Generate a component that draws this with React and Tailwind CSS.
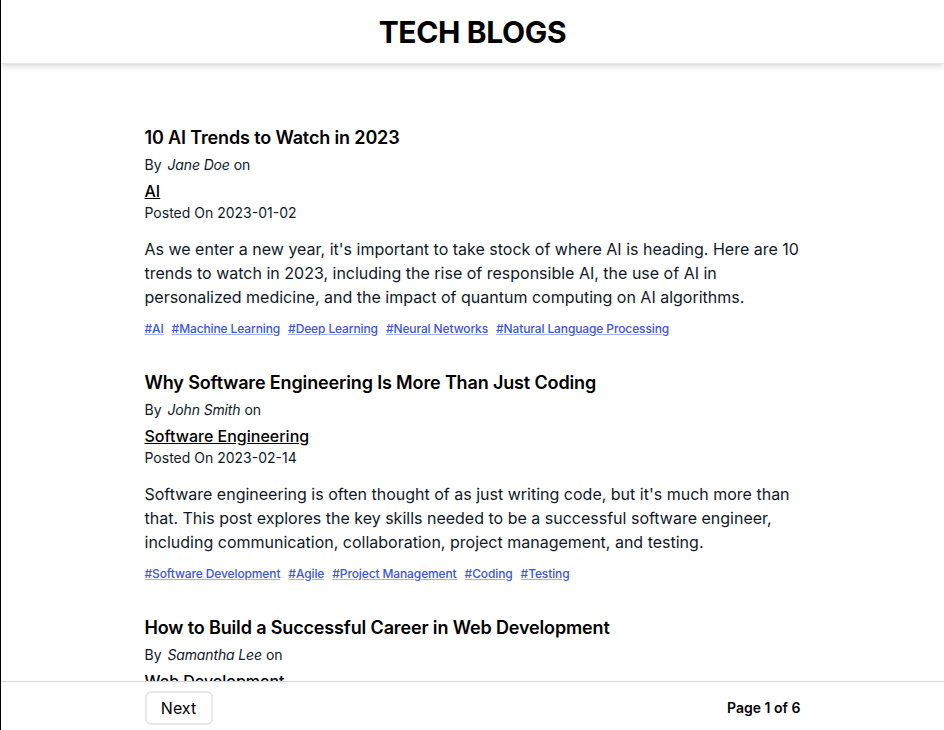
import React, { useState } from 'react';

const posts = [
  {
    title: '10 AI Trends to Watch in 2023',
    author: 'Jane Doe',
    category: 'AI',
    date: '2023-01-02',
    body: "As we enter a new year, it's important to take stock of where AI is heading. Here are 10 trends to watch in 2023, including the rise of responsible AI, the use of AI in personalized medicine, and the impact of quantum computing on AI algorithms.",
    tags: ['AI', 'Machine Learning', 'Deep Learning', 'Neural Networks', 'Natural Language Processing'],
  },
  {
    title: 'Why Software Engineering Is More Than Just Coding',
    author: 'John Smith',
    category: 'Software Engineering',
    date: '2023-02-14',
    body: "Software engineering is often thought of as just writing code, but it's much more than that. This post explores the key skills needed to be a successful software engineer, including communication, collaboration, project management, and testing.",
    tags: ['Software Development', 'Agile', 'Project Management', 'Coding', 'Testing'],
  },
  {
    title: 'How to Build a Successful Career in Web Development',
    author: 'Samantha Lee',
    category: 'Web Development',
    date: '2023-03-08',
    body: 'Web development is a fast-moving field. In this post we look at the skills, tools and habits that help developers grow their careers, from learning the fundamentals to building a portfolio.',
    tags: ['Web Development', 'Career', 'JavaScript', 'Frontend'],
  },
];

function PostCard({ post }) {
  return (
    <article>
      <h2 className="text-lg font-semibold tracking-[-0.008em] text-black mb-[3px]">{post.title}</h2>
      <p className="text-sm text-gray-900">
        By <em className="ml-0.5 tracking-[-0.01em]">{post.author}</em> on
      </p>
      <a href="#" className="block mt-1 text-base font-medium text-black underline">
        {post.category}
      </a>
      <p className="text-sm text-gray-900">Posted On {post.date}</p>
      <p className="mt-[14px] text-base text-gray-900">{post.body}</p>
      <div className="mt-3 flex flex-wrap gap-2">
        {post.tags.map((tag) => (
          <a key={tag} href="#" className="text-xs font-medium tracking-[-0.01em] text-[#3b55d9] underline decoration-[#9fb0f0]">
            #{tag}
          </a>
        ))}
      </div>
    </article>
  );
}

export default function App() {
  const [page, setPage] = useState(1);

  return (
    <div className="min-h-screen bg-white border-l border-black font-['Inter',sans-serif]">
      <header className="sticky top-0 z-10 bg-white h-16 flex items-center justify-center shadow-md border-b border-gray-200">
        <h1 className="text-3xl font-bold tracking-[-0.012em] text-black">TECH BLOGS</h1>
      </header>

      <main className="max-w-2xl mx-auto px-2 pt-[60px] pb-24 space-y-8">
        {posts.map((post) => (
          <PostCard key={post.title} post={post} />
        ))}
      </main>

      <footer className="fixed bottom-0 left-px right-0 h-[49px] bg-white border-t border-gray-300">
        <div className="max-w-2xl mx-auto px-2 h-full flex items-center justify-between">
          <button
            className="mt-[3px] h-[34px] w-[68px] border-2 border-gray-200 rounded-md text-base text-black"
            onClick={() => setPage(page + 1)}>
            Next
          </button>
          <span className="mt-[3px] text-sm font-semibold text-black">Page {page} of 6</span>
        </div>
      </footer>
    </div>
  );
}
